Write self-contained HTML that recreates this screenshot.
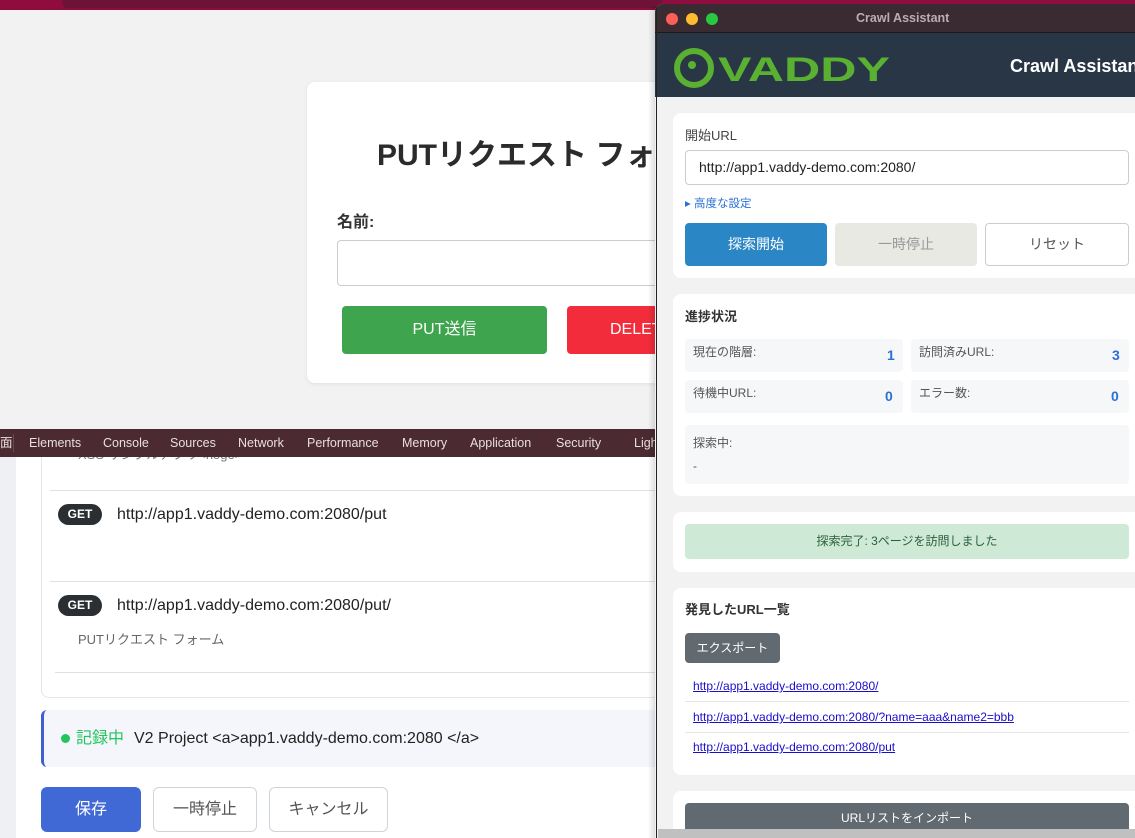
<!DOCTYPE html>
<html><head><meta charset="utf-8"><style>
*{box-sizing:border-box;margin:0;padding:0}
body{width:1135px;height:838px;overflow:hidden;position:relative;background:#f2f2f2;font-family:"Liberation Sans","Noto Sans CJK JP",sans-serif;color:#333;line-height:1.2}
.a{position:absolute}
.btn{position:absolute;display:flex;align-items:center;justify-content:center;border-radius:4px;font-size:15px}
a{color:#1a0dcc;text-decoration:underline}
</style></head><body>
<div class="a" style="left:0;top:0;width:1135px;height:10px;background:#8e0c3e"></div>
<div class="a" style="left:62px;top:0;width:600px;height:8px;background:#6f1237;border-radius:0 0 6px 6px"></div>
<!-- form card -->
<div class="a" style="left:307px;top:82px;width:400px;height:301px;background:#fff;border-radius:8px;box-shadow:0 1px 4px rgba(0,0,0,.08)"></div>
<div class="a" style="left:377px;top:138px;font-size:30px;font-weight:bold;color:#2b2b2b;white-space:nowrap">PUTリクエスト フォーム</div>
<div class="a" style="left:337px;top:213px;font-size:16px;font-weight:bold;color:#333">名前:</div>
<div class="a" style="left:337px;top:240px;width:340px;height:46px;border:1px solid #ccc;border-radius:4px;background:#fff"></div>
<div class="btn" style="left:342px;top:306px;width:205px;height:48px;background:#3ea44d;color:#fff;font-size:16px">PUT送信</div>
<div class="btn" style="left:567px;top:306px;width:120px;height:48px;background:#f22c3a;color:#fff;font-size:16px;justify-content:flex-start;padding-left:43px">DELETE</div>
<!-- lower -->
<div class="a" style="left:0;top:457px;width:660px;height:381px;background:#fff"></div>
<div class="a" style="left:0;top:457px;width:16px;height:381px;background:#eef0f4"></div>
<div class="a" style="left:41px;top:457px;width:620px;height:241px;border:1px solid #e3e6ea;border-top:none;border-radius:0 0 8px 8px"></div>
<div class="a" style="left:78px;top:447px;font-size:13px;color:#777;line-height:16px">XSS サンプルアプリ&lt;hoge&gt;</div>
<!-- devtools -->
<div class="a" style="left:0;top:429px;width:660px;height:28px;background:#4b2a31;color:#e8dfe0;font-size:12.5px;white-space:nowrap">
<span class="a" style="left:0;top:7px">面</span><span class="a" style="left:13px;top:5px;width:1px;height:18px;background:#6a4a50"></span>
<span class="a" style="left:29px;top:7px">Elements</span><span class="a" style="left:103px;top:7px">Console</span><span class="a" style="left:170px;top:7px">Sources</span><span class="a" style="left:238px;top:7px">Network</span><span class="a" style="left:307px;top:7px">Performance</span><span class="a" style="left:402px;top:7px">Memory</span><span class="a" style="left:470px;top:7px">Application</span><span class="a" style="left:556px;top:7px">Security</span><span class="a" style="left:634px;top:7px">Lighthouse</span></div>
<div class="a" style="left:50px;top:490px;width:610px;height:1px;background:#dde1e6"></div>
<div class="a" style="left:50px;top:581px;width:610px;height:1px;background:#dde1e6"></div>
<div class="a" style="left:55px;top:672px;width:605px;height:1px;background:#dde1e6"></div>
<div class="btn" style="left:58px;top:504px;width:44px;height:21px;border-radius:11px;background:#2b2f33;color:#fff;font-size:12px;font-weight:bold">GET</div>
<div class="a" style="left:117px;top:505px;font-size:16px;color:#222">http://app1.vaddy-demo.com:2080/put</div>
<div class="btn" style="left:58px;top:595px;width:44px;height:21px;border-radius:11px;background:#2b2f33;color:#fff;font-size:12px;font-weight:bold">GET</div>
<div class="a" style="left:117px;top:596px;font-size:16px;color:#222">http://app1.vaddy-demo.com:2080/put/</div>
<div class="a" style="left:78px;top:632px;font-size:13px;color:#666">PUTリクエスト フォーム</div>
<div class="a" style="left:41px;top:710px;width:620px;height:57px;background:#f4f6fb;border-left:3px solid #3d62d0;border-radius:6px 0 0 6px"></div>
<div class="a" style="left:61px;top:734px;width:9px;height:9px;border-radius:50%;background:#22c55e"></div>
<div class="a" style="left:76px;top:729px;font-size:16px;color:#22c55e;line-height:19px">記録中</div>
<div class="a" style="left:134px;top:729px;font-size:16px;color:#222;line-height:19px">V2 Project &lt;a&gt;app1.vaddy-demo.com:2080 &lt;/a&gt;</div>
<div class="btn" style="left:41px;top:787px;width:100px;height:45px;background:#4169d6;color:#fff;border-radius:6px;font-size:16px">保存</div>
<div class="btn" style="left:153px;top:787px;width:104px;height:45px;border:1px solid #cfd4dc;color:#555;border-radius:6px;font-size:16px">一時停止</div>
<div class="btn" style="left:269px;top:787px;width:119px;height:45px;border:1px solid #cfd4dc;color:#555;border-radius:6px;font-size:16px">キャンセル</div>
<!-- popup -->
<div class="a" style="left:648px;top:6px;width:8px;height:832px;background:linear-gradient(90deg,rgba(0,0,0,0),rgba(0,0,0,.15))"></div>
<div class="a" style="left:655px;top:4px;width:480px;height:834px;background:#f2f2f2;border-radius:8px 0 0 0;overflow:hidden">
 <div class="a" style="left:0;top:0;width:480px;height:29px;background:#3a2b33;border-bottom:1px solid #1a1a1a"></div>
 <div class="a" style="left:11px;top:9px;width:12px;height:12px;border-radius:50%;background:#fe5f57"></div>
 <div class="a" style="left:31px;top:9px;width:12px;height:12px;border-radius:50%;background:#febc2e"></div>
 <div class="a" style="left:51px;top:9px;width:12px;height:12px;border-radius:50%;background:#28c840"></div>
 <div class="a" style="left:201px;top:7px;font-size:12.5px;font-weight:bold;color:#b8aeb2">Crawl Assistant</div>
 <div class="a" style="left:0;top:29px;width:480px;height:64px;background:#283645"></div>
 <svg class="a" style="left:16px;top:40px" width="225" height="46" viewBox="0 0 225 46">
  <circle cx="23" cy="24" r="17" fill="none" stroke="#5ab031" stroke-width="6"/>
  <circle cx="21" cy="21" r="4" fill="#5ab031"/>
  <text x="47" y="37" font-family="Liberation Sans" font-weight="bold" font-size="34" fill="#5ab031" textLength="172" lengthAdjust="spacingAndGlyphs">VADDY</text>
 </svg>
 <div class="a" style="left:355px;top:52px;font-size:18px;font-weight:bold;color:#fff;white-space:nowrap">Crawl Assistant</div>
 <div class="a" style="left:1px;top:0;width:1px;height:834px;background:#222"></div>
 <!-- card1 -->
 <div class="a" style="left:18px;top:109px;width:470px;height:165px;background:#fff;border-radius:8px"></div>
 <div class="a" style="left:30px;top:124px;font-size:13px;color:#444">開始URL</div>
 <div class="a" style="left:30px;top:146px;width:444px;height:35px;border:1px solid #ccc;border-radius:4px;background:#fff;padding:8px 13px;font-size:14px;color:#222">http://app1.vaddy-demo.com:2080/</div>
 <div class="a" style="left:30px;top:194px;font-size:11.5px;color:#2a6fd6">▸ 高度な設定</div>
 <div class="btn" style="left:30px;top:219px;width:142px;height:43px;background:#2b86c5;color:#fff;font-size:14px">探索開始</div>
 <div class="btn" style="left:180px;top:219px;width:142px;height:43px;background:#e9e9e4;color:#999;font-size:14px">一時停止</div>
 <div class="btn" style="left:330px;top:219px;width:144px;height:43px;border:1px solid #ccc;background:#fff;color:#555;font-size:14px">リセット</div>
 <!-- card2 -->
 <div class="a" style="left:18px;top:290px;width:470px;height:202px;background:#fff;border-radius:8px"></div>
 <div class="a" style="left:30px;top:305px;font-size:13px;font-weight:bold;color:#333">進捗状況</div>
 <div class="a" style="left:30px;top:335px;width:218px;height:33px;background:#f6f7f9;border-radius:4px"></div>
 <div class="a" style="left:256px;top:335px;width:218px;height:33px;background:#f6f7f9;border-radius:4px"></div>
 <div class="a" style="left:30px;top:376px;width:218px;height:33px;background:#f6f7f9;border-radius:4px"></div>
 <div class="a" style="left:256px;top:376px;width:218px;height:33px;background:#f6f7f9;border-radius:4px"></div>
 <div class="a" style="left:38px;top:341px;font-size:12px;color:#555">現在の階層:</div>
 <div class="a" style="left:232px;top:343px;font-size:14px;font-weight:bold;color:#2a6fd6">1</div>
 <div class="a" style="left:264px;top:341px;font-size:12px;color:#555">訪問済みURL:</div>
 <div class="a" style="left:457px;top:343px;font-size:14px;font-weight:bold;color:#2a6fd6">3</div>
 <div class="a" style="left:38px;top:382px;font-size:12px;color:#555">待機中URL:</div>
 <div class="a" style="left:230px;top:384px;font-size:14px;font-weight:bold;color:#2a6fd6">0</div>
 <div class="a" style="left:264px;top:382px;font-size:12px;color:#555">エラー数:</div>
 <div class="a" style="left:456px;top:384px;font-size:14px;font-weight:bold;color:#2a6fd6">0</div>
 <div class="a" style="left:30px;top:421px;width:444px;height:59px;background:#f6f7f9;border-radius:4px"></div>
 <div class="a" style="left:38px;top:432px;font-size:12px;color:#555">探索中:</div>
 <div class="a" style="left:38px;top:455px;font-size:12px;color:#555">-</div>
 <!-- card3 -->
 <div class="a" style="left:18px;top:508px;width:470px;height:60px;background:#fff;border-radius:8px"></div>
 <div class="btn" style="left:30px;top:520px;width:444px;height:35px;background:#cfe9d7;color:#2c5f3a;font-size:12px">探索完了: 3ページを訪問しました</div>
 <!-- card4 -->
 <div class="a" style="left:18px;top:584px;width:470px;height:187px;background:#fff;border-radius:8px"></div>
 <div class="a" style="left:30px;top:598px;font-size:13px;font-weight:bold;color:#333">発見したURL一覧</div>
 <div class="btn" style="left:30px;top:629px;width:95px;height:30px;background:#626a71;color:#fff;font-size:12px">エクスポート</div>
 <a class="a" style="left:38px;top:675px;font-size:12px">http://app1.vaddy-demo.com:2080/</a>
 <div class="a" style="left:30px;top:697px;width:444px;height:1px;background:#e5e5e5"></div>
 <a class="a" style="left:38px;top:706px;font-size:12px">http://app1.vaddy-demo.com:2080/?name=aaa&amp;name2=bbb</a>
 <div class="a" style="left:30px;top:728px;width:444px;height:1px;background:#e5e5e5"></div>
 <a class="a" style="left:38px;top:736px;font-size:12px">http://app1.vaddy-demo.com:2080/put</a>
 <!-- card5 -->
 <div class="a" style="left:18px;top:787px;width:470px;height:60px;background:#fff;border-radius:8px"></div>
 <div class="btn" style="left:30px;top:799px;width:444px;height:34px;background:#626a71;color:#fff;font-size:12px;align-items:flex-start;padding-top:8px">URLリストをインポート</div>
 <div class="a" style="left:3px;top:825px;width:479px;height:10px;background:#c0c0c0"></div>
</div>
</body></html>
